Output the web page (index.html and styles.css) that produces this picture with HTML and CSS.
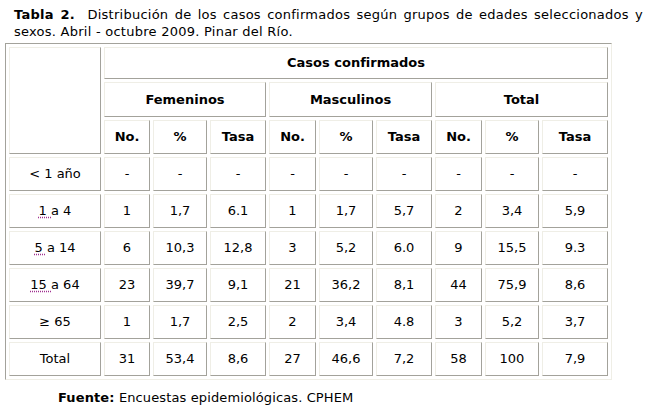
FILE: index.html
```html
<!DOCTYPE html>
<html lang="es">
<head>
<meta charset="utf-8">
<title>Tabla 2</title>
<link rel="stylesheet" href="styles.css">
</head>
<body>
<p class="caption"><b>Tabla 2.</b>&nbsp; Distribución de los casos confirmados según grupos de edades seleccionados y sexos. Abril - octubre 2009. Pinar del Río.</p>
<table class="data">
  <colgroup>
    <col class="c-age"><col class="c-no"><col class="c-pct"><col class="c-tasa">
    <col class="c-no2"><col class="c-pct"><col class="c-tasa">
    <col class="c-no2"><col class="c-pct"><col class="c-tasa-last">
  </colgroup>
  <tr class="r1">
    <td rowspan="3"></td>
    <th colspan="9">Casos confirmados</th>
  </tr>
  <tr class="r2">
    <th colspan="3">Femeninos</th>
    <th colspan="3">Masculinos</th>
    <th colspan="3">Total</th>
  </tr>
  <tr class="r3">
    <th>No.</th><th>%</th><th>Tasa</th>
    <th>No.</th><th>%</th><th>Tasa</th>
    <th>No.</th><th>%</th><th>Tasa</th>
  </tr>
  <tr>
    <td>&lt; 1 año</td><td>-</td><td>-</td><td>-</td><td>-</td><td>-</td><td>-</td><td>-</td><td>-</td><td>-</td>
  </tr>
  <tr>
    <td><span class="mark">1 </span>a 4</td><td>1</td><td>1,7</td><td>6.1</td><td>1</td><td>1,7</td><td>5,7</td><td>2</td><td>3,4</td><td>5,9</td>
  </tr>
  <tr>
    <td><span class="mark">5 </span>a 14</td><td>6</td><td>10,3</td><td>12,8</td><td>3</td><td>5,2</td><td>6.0</td><td>9</td><td>15,5</td><td>9.3</td>
  </tr>
  <tr>
    <td><span class="mark">15 </span>a 64</td><td>23</td><td>39,7</td><td>9,1</td><td>21</td><td>36,2</td><td>8,1</td><td>44</td><td>75,9</td><td>8,6</td>
  </tr>
  <tr>
    <td>≥ 65</td><td>1</td><td>1,7</td><td>2,5</td><td>2</td><td>3,4</td><td>4.8</td><td>3</td><td>5,2</td><td>3,7</td>
  </tr>
  <tr>
    <td>Total</td><td>31</td><td>53,4</td><td>8,6</td><td>27</td><td>46,6</td><td>7,2</td><td>58</td><td>100</td><td>7,9</td>
  </tr>
</table>
<p class="source"><b>Fuente:</b> Encuestas epidemiológicas. CPHEM</p>
</body>
</html>
```

FILE: styles.css
```css
html, body {
  margin: 0;
  padding: 0;
  background: #ffffff;
}

body {
  font-family: "DejaVu Sans", Verdana, sans-serif;
  font-size: 13px;
  line-height: 16px;
  color: #000000;
}

.caption {
  margin: 0;
  padding: 6px 3px 0 14px;
  line-height: 17px;
  letter-spacing: 0.25px;
  text-align: justify;
}

.data {
  margin: 3px 0 0 5px;
  table-layout: fixed;
  border-collapse: separate;
  border-spacing: 3px;
  border-style: solid;
  border-width: 1px;
  border-color: #a3a29b #efeee6 #efeee6 #a3a29b;
}

.c-age { width: 92px; }
.c-no { width: 46px; }
.c-no2 { width: 47px; }
.c-pct { width: 54px; }
.c-tasa { width: 56px; }
.c-tasa-last { width: 66px; }

.data th,
.data td {
  box-sizing: border-box;
  height: 34px;
  padding: 0 2px;
  text-align: center;
  vertical-align: middle;
  border-style: solid;
  border-width: 1px;
  border-color: #efeee6 #a3a29b #a3a29b #efeee6;
  white-space: nowrap;
}

.data th {
  font-weight: bold;
}

.data .r1 th {
  height: 32px;
}

.data .r2 th {
  height: 35px;
}

.mark {
  text-decoration: underline dotted #a03090;
  text-underline-offset: 2px;
}

.source {
  margin: 10px 0 0 58px;
  letter-spacing: 0.12px;
}
```
